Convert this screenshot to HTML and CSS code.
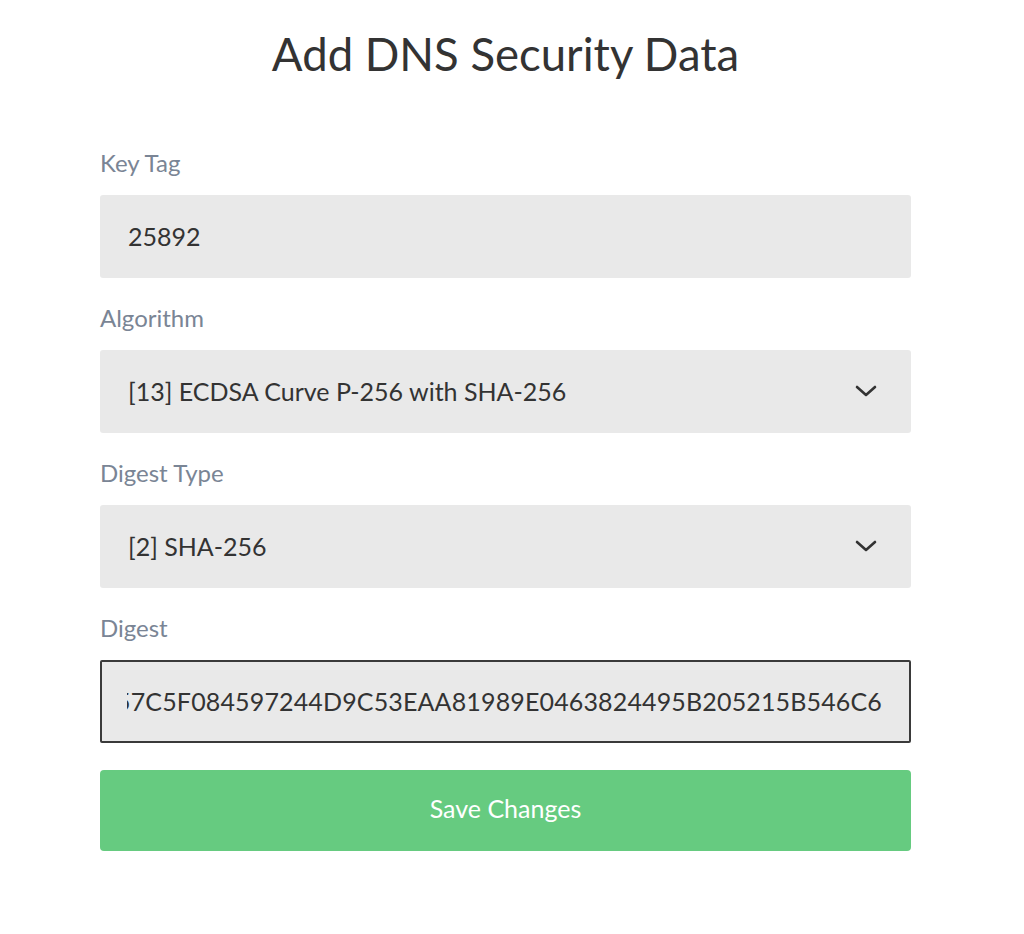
FILE: index.html
```html
<!DOCTYPE html>
<html lang="en">
<head>
<meta charset="utf-8">
<title>Add DNS Security Data</title>
<link rel="stylesheet" href="styles.css">
</head>
<body>
<main class="page">
  <h1 class="title">Add DNS Security Data</h1>
  <form class="form">
    <div class="field">
      <label class="label">Key Tag</label>
      <div class="control">25892</div>
    </div>
    <div class="field">
      <label class="label">Algorithm</label>
      <div class="control select">
        <span>[13] ECDSA Curve P-256 with SHA-256</span>
        <svg class="chev" width="22" height="12" viewBox="0 0 22 12"><path d="M2 2 L11 10 L20 2" fill="none" stroke="#333" stroke-width="2.6" stroke-linecap="round" stroke-linejoin="round"/></svg>
      </div>
    </div>
    <div class="field">
      <label class="label">Digest Type</label>
      <div class="control select">
        <span>[2] SHA-256</span>
        <svg class="chev" width="22" height="12" viewBox="0 0 22 12"><path d="M2 2 L11 10 L20 2" fill="none" stroke="#333" stroke-width="2.6" stroke-linecap="round" stroke-linejoin="round"/></svg>
      </div>
    </div>
    <div class="field">
      <label class="label">Digest</label>
      <div class="control focused">
        <div class="scroller"><span class="digest">3A1E2D94B8F7A0C4E5B9D2F15A857C5F084597244D9C53EAA81989E0463824495B205215B546C6</span></div>
      </div>
    </div>
    <button type="button" class="save">Save Changes</button>
  </form>
</main>
</body>
</html>
```

FILE: styles.css
```css
html, body {
  margin: 0;
  padding: 0;
  background: #ffffff;
}
body {
  font-family: Lato, "Noto Sans", "Liberation Sans", sans-serif;
  color: #333333;
}
.page {
  width: 811px;
  margin-left: 100px;
  padding-top: 26px;
}
.title {
  margin: 0;
  font-weight: 400;
  font-size: 45.5px;
  line-height: 56px;
  text-align: center;
  color: #333333;
}
.form {
  display: flex;
  flex-direction: column;
  margin-top: 66px;
}
.field {
  display: flex;
  flex-direction: column;
  margin-bottom: 25px;
}
.label {
  font-size: 24px;
  line-height: 30px;
  color: #7a8595;
  margin-bottom: 17px;
}
.control {
  height: 83px;
  box-sizing: border-box;
  background: #e9e9e9;
  border-radius: 3px;
  padding: 0 28px 2px;
  display: flex;
  align-items: center;
  font-size: 25px;
  color: #333333;
  white-space: nowrap;
  overflow: hidden;
}
.select {
  justify-content: space-between;
  padding-right: 34px;
}
.focused {
  border: 2px solid #3a3a3a;
  border-radius: 2px;
  padding: 0 27px 2px 25px;
}
.scroller {
  flex: 1;
  display: flex;
  justify-content: flex-end;
  overflow: hidden;
  letter-spacing: 0.15px;
}
.digest {
  flex: none;
}
.save {
  margin-top: 2px;
  height: 81px;
  padding: 0 0 5px;
  border: none;
  border-radius: 4px;
  background: #66cb80;
  color: #ffffff;
  font-family: inherit;
  font-size: 25px;
  cursor: pointer;
}
```
